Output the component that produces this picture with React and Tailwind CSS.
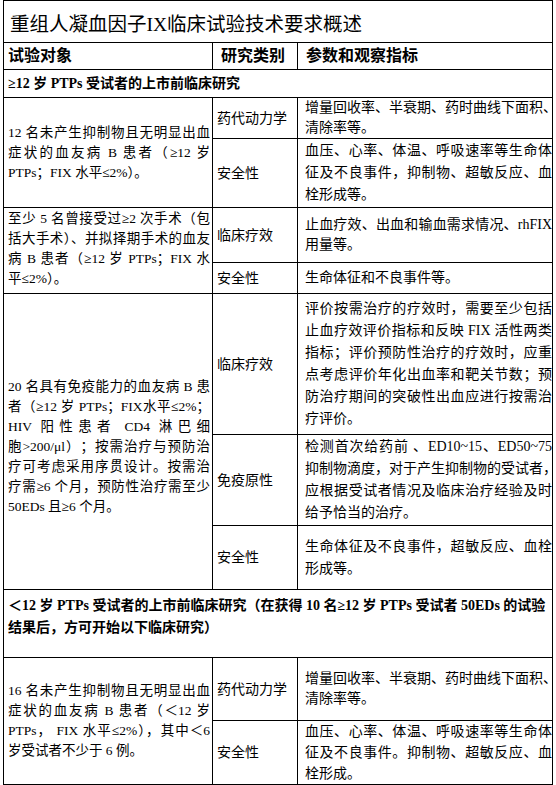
const font = "font-['Liberation_Serif','Noto_Sans_CJK_SC',serif]";

const cell = "border-r border-b border-black";

// trailing punctuation that hangs past the line end, as in the source document
const Hang = ({ children }) => <span className="tracking-[-5px]">{children}</span>;

const groups = [
    {
        subject: "12 名未产生抑制物且无明显出血症状的血友病 B 患者（≥12 岁 PTPs；FIX 水平≤2%）。",
        pad: "",
        items: [
            { type: "药代动力学", text: <>增量回收率、半衰期、药时曲线下面积<Hang>、</Hang>清除率等。</>, lead: "leading-[20px]" },
            { type: "安全性", text: "血压、心率、体温、呼吸速率等生命体征及不良事件，抑制物、超敏反应、血栓形成等。", lead: "leading-[22px]" },
        ],
    },
    {
        subject: "至少 5 名曾接受过≥2 次手术（包括大手术）、并拟择期手术的血友病 B 患者（≥12 岁 PTPs；FIX 水平≤2%）。",
        pad: "pb-[3px]",
        items: [
            { type: "临床疗效", text: "止血疗效、出血和输血需求情况、rhFIX 用量等。", lead: "leading-[20px]" },
            { type: "安全性", text: "生命体征和不良事件等。", lead: "leading-[20px]" },
        ],
    },
    {
        subject: <>20 名具有免疫能力的血友病 B 患者（≥12 岁 PTPs；FIX水平≤2%；HIV 阳性患者 CD4 淋巴细<span className="whitespace-nowrap">胞&gt;200/μl）；</span>按需治疗与预防治疗可考虑采用序贯设计。按需治疗需≥6 个月，预防性治疗需至少 50EDs 且≥6 个月。</>,
        pad: "pt-[10px] [text-spacing-trim:space-all]",
        items: [
            { type: "临床疗效", text: "评价按需治疗的疗效时，需要至少包括止血疗效评价指标和反映 FIX 活性两类指标；评价预防性治疗的疗效时，应重点考虑评价年化出血率和靶关节数；预防治疗期间的突破性出血应进行按需治疗评价。", lead: "leading-[22px]" },
            { type: "免疫原性", text: <>检测首次给药前 、ED10~15、ED50~75 抑制物滴度，对于产生抑制物的受试者<Hang>，</Hang>应根据受试者情况及临床治疗经验及时给予恰当的治疗。</>, lead: "leading-[22px]" },
            { type: "安全性", text: "生命体征及不良事件，超敏反应、血栓形成等。", lead: "leading-[22px]" },
        ],
    },
];

const lastGroup = {
    subject: "16 名未产生抑制物且无明显出血症状的血友病 B 患者（＜12 岁 PTPs， FIX 水平≤2%），其中＜6 岁受试者不少于 6 例。",
    pad: "",
    items: [
        { type: "药代动力学", text: <>增量回收率、半衰期、药时曲线下面积<Hang>、</Hang>清除率等。</>, lead: "leading-[20px]" },
        { type: "安全性", text: "血压、心率、体温、呼吸速率等生命体征及不良事件。抑制物、超敏反应、血栓形成。", lead: "leading-[21px]" },
    ],
};

const Group = ({ group }) => {
    const span = group.items.length === 3 ? "row-span-3" : "row-span-2";
    return (
        <>
            {group.items.map((item, i) => (
                <GroupRow key={item.type + i} item={item} first={i === 0} span={span} group={group} />
            ))}
        </>
    );
};

const GroupRow = ({ item, first, span, group }) => (
    <>
        {first && (
            <div className={`${cell} ${span} ${group.pad} flex items-center pl-[4px] pr-[2px] text-[13.5px]`}>
                <p className="text-justify leading-[20px]">{group.subject}</p>
            </div>
        )}
        <div className={`${cell} flex items-center pl-[4px]`}>{item.type}</div>
        <div className={`${cell} flex items-center pl-[7px]`}>
            <p className={`text-justify ${item.lead}`}>{item.text}</p>
        </div>
    </>
);

export default function App() {
    return (
        <div className={`bg-white min-h-[785px] pl-[3px] text-[14px] text-black ${font}`}>
            <div className="w-[550px] grid grid-cols-[209px_85px_255px] grid-rows-[42px_27px_28px_41px_69px_55px_31px_141px_91px_64px_68px_63px_64px] border-l border-t border-black">
                <div className={`${cell} col-span-3 flex items-center pl-[6px] pt-[7px] text-[19.5px]`}>
                    重组人凝血因子IX临床试验技术要求概述
                </div>
                <div className={`${cell} flex items-center pl-[4px] text-[16px] font-bold`}>试验对象</div>
                <div className={`${cell} flex items-center pl-[8px] text-[16px] font-bold`}>研究类别</div>
                <div className={`${cell} flex items-center pl-[8px] text-[16px] font-bold`}>参数和观察指标</div>
                <div className={`${cell} col-span-3 flex items-center pl-[4px] font-bold`}>
                    ≥12 岁 PTPs 受试者的上市前临床研究
                </div>

                {groups.map((g, i) => (
                    <Group key={i} group={g} />
                ))}

                <div className={`${cell} col-span-3 pl-[4px] pt-[5px] font-bold leading-[22px]`}>
                    <span className="whitespace-nowrap">＜12 岁 PTPs 受试者的上市前临床研究（在获得 10 名≥12 岁 PTPs 受试者 50EDs 的试验</span>
                    <br />
                    结果后，方可开始以下临床研究）
                </div>

                <Group group={lastGroup} />
            </div>
        </div>
    );
}
